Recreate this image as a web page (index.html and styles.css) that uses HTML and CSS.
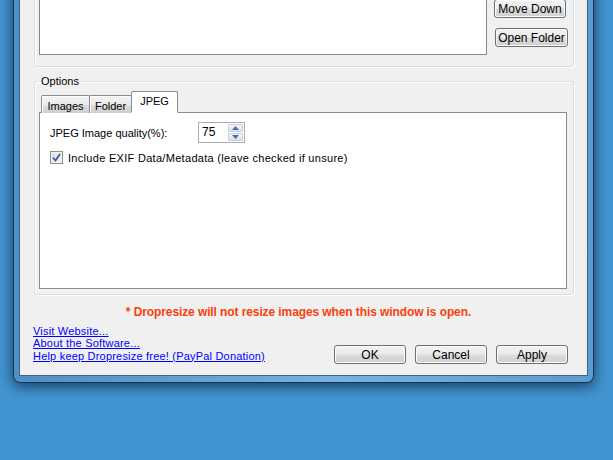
FILE: index.html
```html
<!DOCTYPE html>
<html>
<head>
<meta charset="utf-8">
<link rel="stylesheet" href="styles.css">
</head>
<body>
<div class="window">
  <div class="client">
    <div class="group top-group">
      <div class="listbox"></div>
      <div class="side-buttons">
        <button class="btn btn-move">Move Down</button>
        <button class="btn btn-open">Open Folder</button>
      </div>
    </div>

    <fieldset class="group options">
      <legend class="legend">Options</legend>
      <div class="tabs">
        <div class="tab tab-images">Images</div>
        <div class="tab tab-folder">Folder</div>
        <div class="tab tab-active">JPEG</div>
      </div>
      <div class="panel">
        <div class="row-quality">
          <span class="quality-label">JPEG Image quality(%):</span>
          <div class="spin">
            <span class="spin-value">75</span>
            <div class="spin-btns">
              <div class="spin-btn"><svg width="7" height="4" viewBox="0 0 7 4"><path d="M0 4 L3.5 0 L7 4 Z" fill="#4d6aa3"/></svg></div>
              <div class="spin-btn"><svg width="7" height="4" viewBox="0 0 7 4"><path d="M0 0 L3.5 4 L7 0 Z" fill="#4d6aa3"/></svg></div>
            </div>
          </div>
        </div>
        <label class="row-check">
          <span class="checkbox"><svg width="9" height="9" viewBox="0 0 9 9"><path d="M1 4.5 L3.5 7.5 L8 1" fill="none" stroke="#3c58a0" stroke-width="1.8"/></svg></span>
          <span class="check-label">Include EXIF Data/Metadata (leave checked if unsure)</span>
        </label>
      </div>
    </fieldset>

    <div class="notice">* Dropresize will not resize images when this window is open.</div>

    <div class="bottom-row">
      <div class="links">
        <a href="#">Visit Website...</a>
        <a href="#">About the Software...</a>
        <a href="#">Help keep Dropresize free! (PayPal Donation)</a>
      </div>
      <div class="dialog-buttons">
        <button class="btn">OK</button>
        <button class="btn">Cancel</button>
        <button class="btn">Apply</button>
      </div>
    </div>
  </div>
</div>
</body>
</html>
```

FILE: styles.css
```css
html, body {
  margin: 0;
  padding: 0;
}
body {
  width: 613px;
  height: 460px;
  overflow: hidden;
  background: #4294d0;
  font-family: "Liberation Sans", Arial, sans-serif;
  font-size: 11px;
  color: #000;
}

.window {
  width: 569px;
  margin: -24px 0 0 13px;
  padding: 0 5px 6px 5px;
  border: 1px solid #1d3550;
  border-top: 0;
  border-radius: 0 0 7px 7px;
  background: linear-gradient(90deg, #4f8fc6 0%, #6aa6d8 40%, #79b2e0 55%, #5b9bd1 100%);
  box-shadow: 0 3px 14px rgba(5, 25, 50, 0.75);
}

.client {
  border: 1px solid #3f6384;
  border-top: 0;
  background: #f0f0f0;
  padding-bottom: 11px;
}

.group {
  width: 540px;
  box-sizing: border-box;
  margin: 0 0 0 14px;
  border: 1px solid #d5dfe5;
  border-radius: 3px;
  box-shadow: inset 1px 1px 0 #fff, 1px 1px 0 #fff;
}

.top-group {
  display: flex;
  gap: 7px;
  padding: 10px 0 11px 4px;
}

.listbox {
  width: 446px;
  height: 66px;
  background: #fff;
  border: 1px solid #828790;
}

.side-buttons {
  display: flex;
  flex-direction: column;
  gap: 10px;
  padding-top: 12px;
}

.btn {
  height: 19px;
  width: 72px;
  padding: 0;
  border: 1px solid #707070;
  border-radius: 3px;
  background: linear-gradient(#f2f2f2 0%, #ebebeb 48%, #dddddd 52%, #cfcfcf 100%);
  box-shadow: inset 0 0 0 1px #fbfbfb;
  font-family: "Liberation Sans", Arial, sans-serif;
  font-size: 12px;
  color: #000;
  line-height: 16px;
}
.btn-open { margin-left: 1px; width: 73px; }

.options {
  margin-top: 7px;
  padding: 3px 6px 5px 4px;
  min-width: 0;
}
.legend {
  padding: 0 2px;
  line-height: 14px;
  font-size: 11px;
}

.tabs {
  display: flex;
  align-items: flex-end;
  padding-left: 2px;
  position: relative;
  z-index: 1;
  margin-bottom: -1px;
}
.tab {
  height: 18px;
  box-sizing: border-box;
  border: 1px solid #898c95;
  border-bottom: 0;
  border-radius: 2px 2px 0 0;
  background: linear-gradient(#f3f3f3 0%, #ebebeb 50%, #dddddd 51%, #cfcfcf 100%);
  box-shadow: inset 1px 1px 0 #fff;
  padding-top: 3px;
  line-height: 14px;
  text-align: center;
  margin-right: -1px;
}
.tab-images { width: 49px; }
.tab-folder { width: 43px; }
.tab-active {
  width: 47px;
  height: 22px;
  background: #fff;
  box-shadow: none;
  padding-top: 2px;
  border-bottom: 1px solid #fff;
}

.panel {
  height: 177px;
  box-sizing: border-box;
  background: #fff;
  border: 1px solid #898c95;
  padding: 9px 10px 0 10px;
}

.row-quality {
  display: flex;
  align-items: center;
  height: 21px;
}
.quality-label {
  width: 148px;
}
.spin {
  display: flex;
  width: 47px;
  height: 21px;
  box-sizing: border-box;
  border: 1px solid #abadb3;
  background: #fff;
  padding: 1px;
}
.spin-value {
  flex: 1;
  padding-left: 2px;
  line-height: 17px;
  font-size: 12px;
}
.spin-btns {
  width: 15px;
  display: flex;
  flex-direction: column;
  gap: 1px;
}
.spin-btn {
  flex: 1;
  display: flex;
  align-items: center;
  justify-content: center;
  background: linear-gradient(#f4f6f9, #dde3ea);
  border: 1px solid #c6ced8;
  border-radius: 1px;
}

.row-check {
  display: flex;
  align-items: center;
  gap: 5px;
  margin-top: 8px;
}
.check-label {
  letter-spacing: 0.3px;
}
.checkbox {
  width: 13px;
  height: 13px;
  box-sizing: border-box;
  border: 1px solid #8e8f8f;
  background: linear-gradient(135deg, #dcdcdc, #f8f8f8);
  box-shadow: inset 0 0 0 1px #f0f0f0;
  display: flex;
  align-items: center;
  justify-content: center;
}

.notice {
  margin-top: 10px;
  line-height: 14px;
  text-align: center;
  padding-right: 10px;
  font-size: 12px;
  font-weight: bold;
  letter-spacing: -0.1px;
  color: #f8400c;
}

.bottom-row {
  display: flex;
  justify-content: space-between;
  align-items: flex-start;
  margin-top: 6px;
  padding: 0 19px 0 13px;
}
.links {
  display: flex;
  flex-direction: column;
  align-items: flex-start;
}
.links a {
  color: #0000ff;
  text-decoration: underline;
  line-height: 12.3px;
  letter-spacing: 0.2px;
}
.dialog-buttons {
  display: flex;
  gap: 9px;
  margin-top: 20px;
}
```
